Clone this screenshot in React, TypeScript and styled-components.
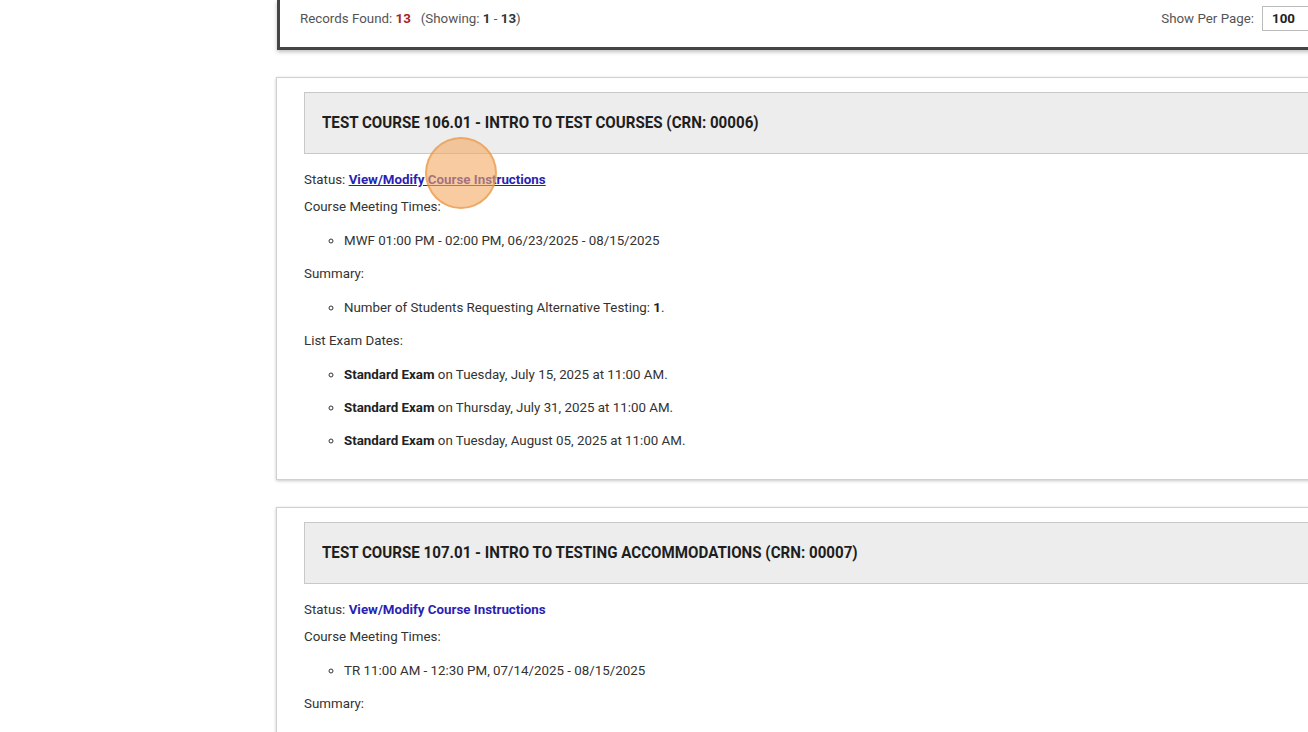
import React from "react";
import styled, { createGlobalStyle } from "styled-components";

const Global = createGlobalStyle`
  html, body { margin: 0; padding: 0; background: #fff; overflow: hidden; }
  body { font-family: Roboto, "Liberation Sans", Arial, sans-serif; color: #333; font-size: 13.33px; }
`;

const Page = styled.div`
  position: relative;
  width: 1308px;
  height: 732px;
  overflow: hidden;
`;

const Main = styled.main`
  margin-left: 276px;
  width: 1080px;
  display: flex;
  flex-direction: column;
  gap: 27px;
`;

const TopBar = styled.div`
  margin-left: 1px;
  border-left: 3px solid #454545;
  border-bottom: 3px solid #454545;
  box-shadow: 0 2px 4px rgba(0, 0, 0, 0.25);
  padding: 6px 0 16px 20px;
  display: flex;
  align-items: center;
  justify-content: space-between;
  height: 25px;
`;

const Records = styled.div`
  color: #555;
  b { color: #333; }
  b.red { color: #a2262a; }
`;

const RightGroup = styled.div`
  display: flex;
  align-items: center;
  gap: 8px;
  margin-right: 23px;
  color: #555;
`;

const Select = styled.div`
  width: 60px;
  height: 23px;
  border: 1px solid #bbb;
  display: flex;
  align-items: center;
  padding-left: 9px;
  font-weight: 700;
  color: #222;
  box-sizing: content-box;
`;

const Card = styled.section`
  border: 1px solid #d0d0d0;
  box-shadow: 0 1px 3px rgba(0, 0, 0, 0.22);
  padding: 14px 27px 15px 27px;
`;

const CardHead = styled.div`
  background: #ededed;
  border: 1px solid #c8c8c8;
  height: 60px;
  display: flex;
  align-items: center;
  padding-left: 17px;
  margin-bottom: 16px;
`;

const Title = styled.h2`
  margin: 0 0 2px;
  font-family: Roboto, "Liberation Sans", sans-serif;
  font-weight: 700;
  font-size: 17px;
  color: #1e1e1e;
  white-space: nowrap;
  transform: scaleX(0.89);
  transform-origin: left center;
`;

const Label = styled.div`
  line-height: 20px;
  margin-bottom: 7px;
  color: #333;
`;

const Link = styled.a<{ $hover?: boolean }>`
  color: #2b1fb3;
  font-weight: 700;
  text-decoration: ${(p) => (p.$hover ? "underline" : "none")};
  cursor: pointer;
`;

const List = styled.ul`
  margin: 0 0 7px;
  padding-left: 40px;
  list-style: circle;
`;

const Item = styled.li`
  line-height: 33px;
  color: #333;
  b { color: #222; }
`;

const Cursor = styled.div`
  position: absolute;
  left: 425px;
  top: 137px;
  width: 68px;
  height: 68px;
  border-radius: 50%;
  background: rgba(244, 168, 96, 0.6);
  border: 2px solid rgba(232, 150, 70, 0.65);
  pointer-events: none;
`;

type Course = {
  title: string;
  hover?: boolean;
  times: string[];
  students: number;
  exams: string[];
};

const courses: Course[] = [
  {
    title: "TEST COURSE 106.01 - INTRO TO TEST COURSES (CRN: 00006)",
    hover: true,
    times: ["MWF 01:00 PM - 02:00 PM, 06/23/2025 - 08/15/2025"],
    students: 1,
    exams: [
      "Tuesday, July 15, 2025 at 11:00 AM.",
      "Thursday, July 31, 2025 at 11:00 AM.",
      "Tuesday, August 05, 2025 at 11:00 AM.",
    ],
  },
  {
    title: "TEST COURSE 107.01 - INTRO TO TESTING ACCOMMODATIONS (CRN: 00007)",
    times: ["TR 11:00 AM - 12:30 PM, 07/14/2025 - 08/15/2025"],
    students: 1,
    exams: ["Tuesday, July 22, 2025 at 11:00 AM."],
  },
];

export default function App() {
  return (
    <Page>
      <Global />
      <Main>
        <TopBar>
          <Records>
            Records Found: <b className="red">13</b>&nbsp;&nbsp;&nbsp;(Showing: <b>1</b> - <b>13</b>)
          </Records>
          <RightGroup>
            <span>Show Per Page:</span>
            <Select>100</Select>
          </RightGroup>
        </TopBar>
        {courses.map((c) => (
          <Card key={c.title}>
            <CardHead>
              <Title>{c.title}</Title>
            </CardHead>
            <Label>
              Status: <Link $hover={c.hover}>View/Modify Course Instructions</Link>
            </Label>
            <Label>Course Meeting Times:</Label>
            <List>
              {c.times.map((t) => (
                <Item key={t}>{t}</Item>
              ))}
            </List>
            <Label>Summary:</Label>
            <List>
              <Item>
                Number of Students Requesting Alternative Testing: <b>{c.students}</b>.
              </Item>
            </List>
            <Label>List Exam Dates:</Label>
            <List>
              {c.exams.map((e) => (
                <Item key={e}>
                  <b>Standard Exam</b> on {e}
                </Item>
              ))}
            </List>
          </Card>
        ))}
      </Main>
      <Cursor />
    </Page>
  );
}
